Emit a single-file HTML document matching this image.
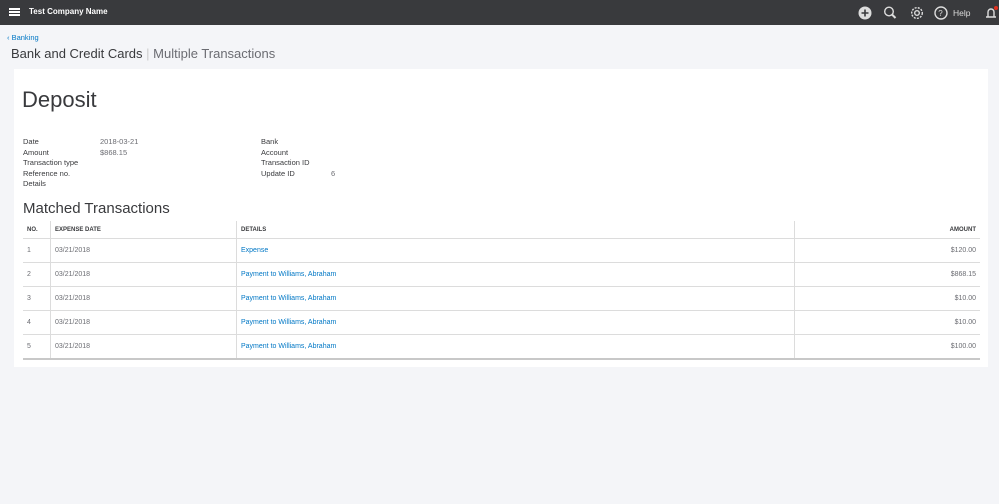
<!DOCTYPE html><html><head><style>
body{margin:0;width:999px;height:504px;background:#f4f5f8;font-family:"Liberation Sans",sans-serif;position:relative;overflow:hidden;color:#393a3d}
.top{position:absolute;left:0;top:0;width:999px;height:25px;background:#393a3d}
.a{position:absolute;white-space:nowrap}
.card{position:absolute;left:14px;top:69px;width:974px;height:298px;background:#fff}
.lbl{font-size:7.5px;color:#393a3d}
table{position:absolute;left:23px;top:221px;width:957px;border-collapse:collapse;font-size:7px}
td,th{height:23px;padding:0 4px;border-bottom:1px solid #dcdcdc;text-align:left;color:#6b6c72}
th{font-size:6px;color:#393a3d;height:17px;font-weight:bold}
td.v,th.v{border-right:1px solid #dcdcdc}
td.l{color:#0077c5}
tr:last-child td{border-bottom:2px solid #c8c8c8}
.r{text-align:right}
</style></head><body>
<div class="top"></div>
<div class="a" style="left:9px;top:8px;width:11px;height:2px;background:#fff;box-shadow:0 3px 0 #fff,0 6px 0 #fff"></div>
<div class="a" style="left:29px;top:7px;font-size:8px;font-weight:bold;color:#fff">Test Company Name</div>
<svg class="a" style="left:857px;top:5px" width="142" height="16" viewBox="0 0 142 16" fill="none" stroke="#ddd" stroke-width="1.4">
<circle cx="8" cy="8" r="6.5" fill="#ddd" stroke="none"/><path d="M8 4.5v7M4.5 8h7" stroke="#393a3d" stroke-width="1.6"/>
<circle cx="32" cy="6.5" r="4.3"/><path d="M35 9.5l3.5 3.5" stroke-width="2"/>
<circle cx="60" cy="8" r="2.3"/><circle cx="60" cy="8" r="5.3" stroke-dasharray="2 1.2"/>
<circle cx="84" cy="8" r="6"/><text x="81.3" y="11" font-size="8" fill="#ddd" stroke="none" font-family="Liberation Sans">?</text>
<text x="96" y="11" font-size="8.5" fill="#ddd" stroke="none" font-family="Liberation Sans">Help</text>
<path d="M129 12h10M131 12V7a3 3 0 0 1 6 0v5"/><circle cx="139" cy="3" r="2" fill="#e0301e" stroke="none"/>
</svg>
<div class="a" style="left:7px;top:33px;font-size:7.5px;color:#0077c5">‹ Banking</div>
<div class="a" style="left:11px;top:46px;font-size:13px;color:#393a3d">Bank and Credit Cards <span style="color:#ccc">|</span> <span style="color:#6b6c72">Multiple Transactions</span></div>
<div class="card"></div>
<div class="a" style="left:22px;top:87px;font-size:22px;color:#393a3d">Deposit</div>
<div class="a lbl" style="left:23px;top:137px;line-height:10.6px">Date<br>Amount<br>Transaction type<br>Reference no.<br>Details</div>
<div class="a lbl" style="left:100px;top:137px;line-height:10.6px;color:#6b6c72">2018-03-21<br>$868.15</div>
<div class="a lbl" style="left:261px;top:137px;line-height:10.6px">Bank<br>Account<br>Transaction ID<br>Update ID</div>
<div class="a lbl" style="left:331px;top:169px;color:#6b6c72">6</div>
<div class="a" style="left:23px;top:200px;font-size:15px;color:#393a3d">Matched Transactions</div>
<table>
<tr><th class="v" style="width:19px">NO.</th><th class="v" style="width:177px">EXPENSE DATE</th><th class="v" style="width:549px">DETAILS</th><th class="r">AMOUNT</th></tr>
<tr><td class="v">1</td><td class="v">03/21/2018</td><td class="v l">Expense</td><td class="r">$120.00</td></tr>
<tr><td class="v">2</td><td class="v">03/21/2018</td><td class="v l">Payment to Williams, Abraham</td><td class="r">$868.15</td></tr>
<tr><td class="v">3</td><td class="v">03/21/2018</td><td class="v l">Payment to Williams, Abraham</td><td class="r">$10.00</td></tr>
<tr><td class="v">4</td><td class="v">03/21/2018</td><td class="v l">Payment to Williams, Abraham</td><td class="r">$10.00</td></tr>
<tr><td class="v">5</td><td class="v">03/21/2018</td><td class="v l">Payment to Williams, Abraham</td><td class="r">$100.00</td></tr>
</table>
</body></html>
